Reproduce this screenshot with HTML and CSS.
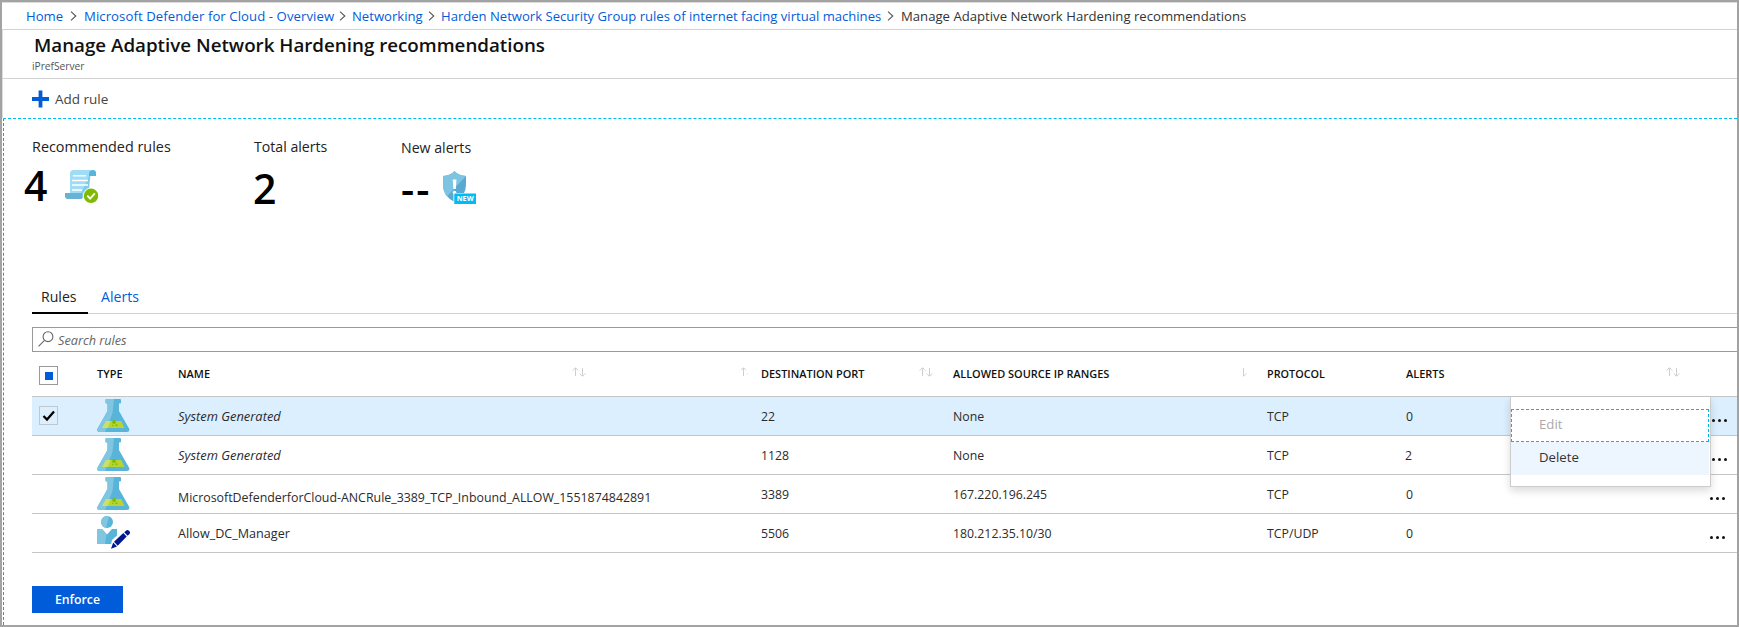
FILE: index.html
```
<!DOCTYPE html>
<html lang="en">
<head>
<meta charset="utf-8">
<title>Manage Adaptive Network Hardening recommendations</title>
<link rel="stylesheet" href="styles.css">
</head>
<body>
<svg class="defs" aria-hidden="true">
  <symbol id="chevron" viewBox="0 0 7 10"><path d="M1 .7 5.8 5 1 9.3" fill="none" stroke="#555" stroke-width="1.1"/></symbol>
  <symbol id="up" viewBox="0 0 7 9"><path d="M3.500 9V1M.6 3.600 3.500.7 6.400 3.600" fill="none" stroke="#cfcfcf" stroke-width="1"/></symbol>
  <symbol id="up-cut" viewBox="0 0 7 9"><path d="M2.500 9V1M0 3.200 2.500.7 5 3.200M6 6.500l1 1" fill="none" stroke="#cfcfcf" stroke-width="1"/></symbol>
  <symbol id="down" viewBox="0 0 7 9"><path d="M3.500 0V8M.6 5.400 3.500 8.300 6.400 5.400" fill="none" stroke="#cfcfcf" stroke-width="1"/></symbol>
  <symbol id="down-cut" viewBox="0 0 7 9"><path d="M3.500 0V8.300L6.400 5.400" fill="none" stroke="#cfcfcf" stroke-width="1"/></symbol>
  <symbol id="flask" viewBox="0 0 33 33">
    <path d="M9.500 0H23a1 1 0 0 1 1 1v2.400a1 1 0 0 1-1 1H22V12L32 29.500C33 31.500 32 33 30 33H2.500C.5 33-.4 31.500.6 29.500L10.500 12V4.400H9.500a1 1 0 0 1-1-1V1a1 1 0 0 1 1-1Z" fill="#59b4d9"/>
    <path d="M9.500 0H17L15.500 14 8 33H2.500C.5 33-.4 31.500.6 29.500L10.500 12V4.400H9.500a1 1 0 0 1-1-1V1a1 1 0 0 1 1-1Z" fill="#80c6e1"/>
    <path d="M9 22H24.200L27.500 29H5Z" fill="#b8d432"/>
    <path d="M9 22h4.500L10.600 29H5Z" fill="#cbe06a"/>
    <circle cx="17" cy="23" r="1.900" fill="#7fba00"/><circle cx="19.500" cy="26.200" r="1" fill="#7fba00"/><circle cx="15.800" cy="26.500" r=".7" fill="#7fba00"/>
  </symbol>
</svg>
<div class="frame">
  <nav class="crumbs">
    <a class="c-home">Home</a><svg class="chev"><use href="#chevron"/></svg>
    <a class="c-defender">Microsoft Defender for Cloud - Overview</a><svg class="chev"><use href="#chevron"/></svg>
    <a class="c-net">Networking</a><svg class="chev"><use href="#chevron"/></svg>
    <a class="c-harden">Harden Network Security Group rules of internet facing virtual machines</a><svg class="chev"><use href="#chevron"/></svg>
    <span>Manage Adaptive Network Hardening recommendations</span>
  </nav>
  <header class="head">
    <h1>Manage Adaptive Network Hardening recommendations</h1>
    <p>iPrefServer</p>
  </header>
  <div class="toolbar">
    <svg class="plus" viewBox="0 0 18 18"><path d="M7 0h4v7h7v4h-7v7H7v-7H0V7h7z" fill="#015cda"/></svg>
    <span>Add rule</span>
  </div>
  <main class="main">
    <section class="stats">
      <div class="stat stat-rules">
        <div class="label">Recommended rules</div>
        <div class="value"><b>4</b>
          <svg class="stat-icon" viewBox="0 0 33 33">
            <path d="M7 0H28Q24.500 1 24.500 5L23 28H5V4Q5 1 7 0Z" fill="#9fdcf5"/>
            <path d="M24.500 5 14 28H23L25.500 5Z" fill="#7fcbe8"/>
            <path d="M28 0q3 0 3 3v3h-7V3.500Q24.500 0 28 0Z" fill="#59b4d9"/>
            <path d="M0 23h17v6H3q-3 0-3-3Z" fill="#68b2d8"/>
            <path d="M8 5.700H21M7 10.500H23M7 15H23M7 20H17" stroke="#fff" stroke-width="1.600"/>
            <circle cx="26" cy="25.800" r="8" fill="#fff"/><circle cx="26" cy="25.800" r="7.200" fill="#7fba00"/>
            <path d="m22.300 25.700 2.800 2.900 4.700-5.300" fill="none" stroke="#fff" stroke-width="1.800"/>
          </svg>
        </div>
      </div>
      <div class="stat stat-total">
        <div class="label">Total alerts</div>
        <div class="value"><b>2</b></div>
      </div>
      <div class="stat stat-new">
        <div class="label">New alerts</div>
        <div class="value"><b>--</b>
          <svg class="stat-icon" viewBox="0 0 33 33">
            <path d="M11.500 0Q15 4.500 23 5V14Q23 25 11.500 31Q0 25 0 14V5Q8 4.500 11.500 0Z" fill="#5ba9d2"/>
            <path d="M11.500 0Q15 4.500 23 5L4 25.500Q0 21 0 14V5Q8 4.500 11.500 0Z" fill="#7dc4e2"/>
            <path d="M9.700 8.500h3.800L12.800 18h-2.400Z" fill="#fff"/><circle cx="11.500" cy="21.500" r="1.800" fill="#fff"/>
            <path d="M10.500 22H33V33H10.500Z" fill="#fff"/><path d="M11.300 22.500H33V33H11.300Z" fill="#00bcf2"/>
            <text x="22.200" y="30.400" text-anchor="middle" class="new-text">NEW</text>
          </svg>
        </div>
      </div>
    </section>
    <div class="tabs"><span class="tab active">Rules</span><span class="tab">Alerts</span></div>
    <div class="search">
      <svg class="lens" viewBox="0 0 16 16"><circle cx="10" cy="5.700" r="4.900" fill="none" stroke="#666" stroke-width="1.100"/><path d="M6.500 9.300.5 15.300" stroke="#666" stroke-width="1.100"/></svg>
      <span>Search rules</span>
    </div>
    <div class="grid">
      <div class="row header">
        <span class="check mixed"><i></i></span>
        <span>TYPE</span>
        <span class="h name-h"><em>NAME</em><svg class="sort"><use href="#up"/></svg><svg class="sort low"><use href="#down"/></svg><svg class="sort cut"><use href="#up-cut"/></svg></span>
        <span class="h port-h"><em>DESTINATION PORT</em><svg class="sort"><use href="#up"/></svg><svg class="sort low"><use href="#down"/></svg></span>
        <span class="h source-h"><em>ALLOWED SOURCE IP RANGES</em><svg class="sort low"><use href="#down-cut"/></svg></span>
        <span class="h protocol">PROTOCOL</span>
        <span class="h alerts-h"><em>ALERTS</em><svg class="sort"><use href="#up"/></svg><svg class="sort low"><use href="#down"/></svg></span>
      </div>
      <div class="row selected">
        <span class="check"><svg viewBox="0 0 17 17"><path d="M3.500 9 7 12.500 14 4.500" fill="none" stroke="#000" stroke-width="2.300"/></svg></span>
        <svg class="type"><use href="#flask"/></svg>
        <span class="cell sys">System Generated</span><span class="cell">22</span><span class="cell">None</span><span class="cell">TCP</span><span class="cell">0</span>
        <span class="more"><i></i><i></i><i></i></span>
        <div class="menu"><div class="item disabled">Edit</div><div class="item hover">Delete</div></div>
      </div>
      <div class="row">
        <span></span>
        <svg class="type"><use href="#flask"/></svg>
        <span class="cell sys">System Generated</span><span class="cell">1128</span><span class="cell">None</span><span class="cell">TCP</span><span class="cell two">2</span>
        <span class="more"><i></i><i></i><i></i></span>
      </div>
      <div class="row">
        <span></span>
        <svg class="type"><use href="#flask"/></svg>
        <span class="cell long">MicrosoftDefenderforCloud-ANCRule_3389_TCP_Inbound_ALLOW_1551874842891</span><span class="cell">3389</span><span class="cell">167.220.196.245</span><span class="cell">TCP</span><span class="cell">0</span>
        <span class="more near"><i></i><i></i><i></i></span>
      </div>
      <div class="row">
        <span></span>
        <svg class="type" viewBox="0 0 33 33">
          <circle cx="10" cy="6" r="6" fill="#59b4d9"/><path d="M12 .4A6 6 0 1 0 9 12Z" fill="#80c6e1"/>
          <path d="M0 13H5L10 18.500 15 13H20V28H0Z" fill="#59b4d9"/><path d="M0 13H5L9.500 18 8 28H0Z" fill="#80c6e1"/>
          <path d="M13 33.500 15 24 28 12.500 34 17.500 21 31Z" fill="#fff"/>
          <path d="M14 32.700 16.200 26.600 20 30.600ZM17 25.700 26.300 17 29.700 20.400 20.700 29.700ZM27.200 16.200 29.200 14.400Q30.500 13.400 32 14.800 33.800 16.600 32.500 17.900L30.600 19.700Z" fill="#00188f"/>
        </svg>
        <span class="cell name">Allow_DC_Manager</span><span class="cell">5506</span><span class="cell">180.212.35.10/30</span><span class="cell">TCP/UDP</span><span class="cell">0</span>
        <span class="more near"><i></i><i></i><i></i></span>
      </div>
    </div>
    <button class="enforce">Enforce</button>
  </main>
</div>
</body>
</html>
```
FILE: styles.css
```
* { box-sizing: border-box; }
body { margin: 0; background: #fff; color: #2b2b2b; font: 12.3px "Open Sans", "Noto Sans", sans-serif; }
.defs { position: absolute; width: 0; height: 0; }
svg { display: block; flex: none; }
.frame { width: 1739px; height: 627px; border: 2px solid #a3a3a3; display: flex; flex-direction: column; overflow: hidden; }
.crumbs { height: 28px; flex: none; border-top: 1px solid #dcdcdc; border-bottom: 1px solid #d3d3d3; padding: 0 0 1px 24px; display: flex; align-items: center; font-size: 13.15px; color: #333; white-space: nowrap; }
.crumbs a { color: #015cda; flex: none; }
.crumbs .c-home { width: 44px; }
.crumbs .c-defender { width: 255px; letter-spacing: .08px; }
.crumbs .c-net { width: 76px; font-size: 13.1px; }
.crumbs .c-harden { width: 446px; font-size: 13.09px; }
.chev { width: 7px; height: 10px; margin-right: 7px; }
.crumbs .c-defender + .chev { margin-right: 6px; }
.crumbs .c-net + .chev { margin-right: 6px; }
.head { height: 49px; flex: none; border-bottom: 1px solid #d3d3d3; border-left: 1px solid #dcdcdc; }
.head h1 { margin: 2px 0 0 31px; font-size: 18.75px; line-height: 26px; font-weight: 600; color: #111; }
.head p { margin: 1px 0 0 29px; font-size: 10.2px; line-height: 14px; color: #555; }
.toolbar { height: 39px; flex: none; display: flex; align-items: center; padding: 1px 0 0 29px; border-left: 1px solid #dcdcdc; font-size: 13.5px; color: #444; }
.plus { width: 17px; height: 18px; margin-right: 6px; }
.main { flex: 1; margin-left: 1px; border-left: 1px dashed #00a8dc; border-top: 1px dashed #00bcf2; padding-left: 28px; display: flex; flex-direction: column; align-items: stretch; }
.stats { display: flex; height: 165px; padding-top: 18px; color: #111; }
.stat-rules { width: 221px; }
.stat-total { width: 148px; }
.stat .label { font-size: 14.15px; line-height: 20px; color: #222; }
.stat-rules .label { font-size: 14.4px; }
.stat-total .label { padding-left: 1px; }
.stat-new .label { padding-top: 1px; }
.value { display: flex; align-items: flex-start; }
.value b { font-size: 41px; font-weight: 600; line-height: 56px; color: #000; }
.stat-rules b { margin-left: -8px; width: 41px; }
.stat-total b { margin-top: 3px; }
.stat-new b { width: 42px; margin-top: 2px; letter-spacing: 2px; }
.stat-icon { width: 33px; height: 33px; margin-top: 13px; }
.new-text { font-size: 7.2px; font-weight: 700; fill: #fff; }
.tabs { height: 30px; border-bottom: 1px solid #d3d3d3; display: flex; }
.tab { font-size: 14.1px; line-height: 26px; padding: 0 13px; color: #015cda; height: 30px; }
.tab.active { width: 56px; padding: 0 0 0 9px; border-bottom: 2px solid #000; color: #222; }
.search { height: 25px; margin-top: 13px; border: 1px solid #999; border-right: 0; display: flex; align-items: center; font-style: italic; font-size: 12.7px; color: #666; }
.lens { width: 16px; height: 16px; margin: 0 4px 2px 5px; }
.row { display: grid; grid-template-columns: 65px 81px 583px 192px 314px 139px 304px 1fr; height: 39px; align-items: center; border-bottom: 1px solid #c6c6c6; position: relative; padding-bottom: 2px; }
.header { height: 45px; font-size: 10.95px; font-weight: 600; color: #111; padding: 0; }
.header > span:not(.check) { margin-bottom: 2px; }
.header em { font-style: normal; white-space: nowrap; }
.h { display: flex; align-items: center; }
.sort { width: 7px; height: 9px; margin-bottom: 3px; }
.sort.low { margin-bottom: 1px; }
.name-h em { width: 394px; }
.name-h .cut { margin-left: 155px; }
.port-h em { width: 158px; }
.source-h em { width: 287px; }
.alerts-h em { width: 260px; }
.protocol { font-size: 10.8px; }
.selected { background: #dcefff; }
.check { width: 19px; height: 19px; margin-left: 7px; border: 1px solid #bbb; display: grid; place-items: center; background: #fff; }
.selected .check { background: transparent; border-color: #c0c8ce; }
.check.mixed { border-color: #999; margin-top: 3px; }
.check i { width: 8px; height: 8px; background: #015cda; }
.check svg { width: 17px; height: 17px; }
.type { width: 33px; height: 33px; }
.cell { margin-top: 2px; }
.sys { font-size: 12.9px; font-style: italic; }
.long { margin-top: 8px; font-size: 12.39px; }
.name { font-size: 12.6px; }
.two { margin-left: -1px; }
.more { display: flex; gap: 3px; margin: 11px 0 0 2px; }
.more.near { margin-left: 0; }
.more i { width: 3px; height: 3px; border-radius: 50%; background: #111; }
.menu { position: absolute; left: 1478px; top: 0; width: 201px; height: 90px; padding: 12px 1px 0 0; background: #fff; border: 1px solid #ccc; border-top: 0; box-shadow: 0 4px 8px rgba(0,0,0,.14); z-index: 2; }
.item { height: 33px; line-height: 30px; padding-left: 28px; font-size: 13.2px; }
.disabled { border: 1px dashed #00b7ee; padding-left: 27px; line-height: 28px; color: #aaa; }
.hover { background: #edf5ff; color: #333; }
.enforce { width: 91px; height: 27px; margin-top: 33px; border: 0; background: #015cda; color: #fff; font: 600 12.3px "Open Sans", sans-serif; padding: 0; }
```
